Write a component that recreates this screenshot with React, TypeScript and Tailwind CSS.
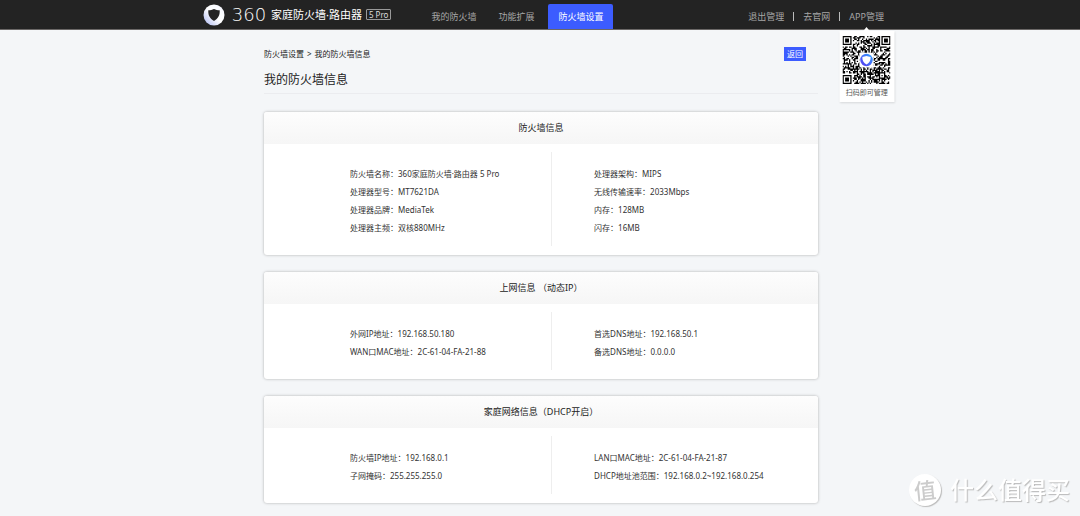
import React from 'react';

type InfoItem = {
  label: string;
  value: string;
};

type InfoCardProps = {
  title: string;
  left: InfoItem[];
  right: InfoItem[];
};

const QR_SIZE = 37;

// Finder squares in three corners, filler modules everywhere else
const isDark = (x: number, y: number) => {
  const corners = [[0, 0], [QR_SIZE - 7, 0], [0, QR_SIZE - 7]];
  for (const [cx, cy] of corners) {
    const dx = Math.abs(x - cx - 3);
    const dy = Math.abs(y - cy - 3);
    const ring = Math.max(dx, dy);
    if (ring <= 4) return ring !== 2 && ring !== 4;
  }
  const ax = Math.max(Math.abs(x - 30), Math.abs(y - 30));
  if (ax <= 2) return ax !== 1;
  let h = Math.imul(x + 11, 374761393) ^ Math.imul(y + 7, 668265263);
  h = Math.imul(h ^ (h >>> 13), 1274126177);
  h = Math.imul(h ^ (h >>> 15), 2246822519);
  return ((h ^ (h >>> 16)) & 255) < 138;
};

const qrPath = () => {
  let d = '';
  for (let y = 0; y < QR_SIZE; y++) {
    for (let x = 0; x < QR_SIZE; x++) {
      if (isDark(x, y)) d += `M${x} ${y}h1v1h-1z`;
    }
  }
  return d;
};

const QrCode = () => (
  <svg viewBox="0 0 37 37" className="size-12" role="img" aria-label="APP二维码">
    <defs>
      <linearGradient id="qr-badge" x1="0" y1="1" x2="1" y2="0">
        <stop offset="0" stopColor="#5a35f0" />
        <stop offset="1" stopColor="#2fa4ff" />
      </linearGradient>
    </defs>
    <path d={qrPath()} fill="#000" />
    <rect x="13" y="13" width="11" height="11" rx="1" fill="#fff" />
    <circle cx="18.5" cy="18.5" r="4.8" fill="url(#qr-badge)" />
    <path d="M18.5 15.400c1 .4 2 .6 3.200.7.1 2.600-.7 4.400-3.200 5.900-2.500-1.500-3.300-3.300-3.200-5.900 1.200-.1 2.200-.3 3.200-.7z" fill="#fff" />
  </svg>
);

const Logo = () => (
  <svg viewBox="0 0 22 22" className="size-[22px]" aria-hidden="true">
    <defs>
      <linearGradient id="logo-ring" x1="0" y1="1" x2="1" y2="0">
        <stop offset="0" stopColor="#a9b4f0" />
        <stop offset="0.5" stopColor="#ffffff" />
        <stop offset="1" stopColor="#f4f6ff" />
      </linearGradient>
    </defs>
    <circle cx="11" cy="11" r="10.5" fill="url(#logo-ring)" />
    <path d="M11 5c1.700.8 3.500 1.200 5.700 1.300.3 4.900-1.500 8.200-5.700 10.700-4.200-2.500-6-5.800-5.700-10.700 2.200-.1 4-.5 5.700-1.300z" fill="#232323" />
  </svg>
);

const InfoList = ({ items }: { items: InfoItem[] }) => (
  <dl className="text-[8px] leading-[18px] text-[#333]">
    {items.map((item) => (
      <div key={item.label} className="flex whitespace-nowrap">
        <dt>{item.label}：</dt>
        <dd>{item.value}</dd>
      </div>
    ))}
  </dl>
);

const InfoCard = ({ title, left, right }: InfoCardProps) => (
  <section className="overflow-hidden rounded-[3px] bg-white shadow-[0_0_3px_rgba(0,0,0,0.3)]">
    <h2 className="bg-linear-to-b from-[#fdfdfd] to-[#f6f6f6] text-center text-[9px] leading-8 text-[#222]">
      {title}
    </h2>
    <div className="flex pt-2 pb-[9px]">
      <div className="w-[52%] border-r border-[#eee] pt-[13px] pb-[9px] pl-[86px]">
        <InfoList items={left} />
      </div>
      <div className="flex-1 pt-[13px] pb-[9px] pl-[42px]">
        <InfoList items={right} />
      </div>
    </div>
  </section>
);

const cards: InfoCardProps[] = [
  {
    title: '防火墙信息',
    left: [
      { label: '防火墙名称', value: '360家庭防火墙·路由器 5 Pro' },
      { label: '处理器型号', value: 'MT7621DA' },
      { label: '处理器品牌', value: 'MediaTek' },
      { label: '处理器主频', value: '双核880MHz' },
    ],
    right: [
      { label: '处理器架构', value: 'MIPS' },
      { label: '无线传输速率', value: '2033Mbps' },
      { label: '内存', value: '128MB' },
      { label: '闪存', value: '16MB' },
    ],
  },
  {
    title: '上网信息 （动态IP）',
    left: [
      { label: '外网IP地址', value: '192.168.50.180' },
      { label: 'WAN口MAC地址', value: '2C-61-04-FA-21-88' },
    ],
    right: [
      { label: '首选DNS地址', value: '192.168.50.1' },
      { label: '备选DNS地址', value: '0.0.0.0' },
    ],
  },
  {
    title: '家庭网络信息（DHCP开启）',
    left: [
      { label: '防火墙IP地址', value: '192.168.0.1' },
      { label: '子网掩码', value: '255.255.255.0' },
    ],
    right: [
      { label: 'LAN口MAC地址', value: '2C-61-04-FA-21-87' },
      { label: 'DHCP地址池范围', value: '192.168.0.2~192.168.0.254' },
    ],
  },
];

const Header = () => (
  <header className="border-b border-[#6b6867] bg-[#232323] text-[9px] text-[#a6a6a6]">
    <div className="mx-auto flex h-[29px] max-w-[690px] items-center pr-px pl-2 whitespace-nowrap">
      <a href="#home" className="flex items-center text-white">
        <Logo />
        <span className="ml-1 w-10 text-center font-['DejaVu_Sans',sans-serif] text-lg leading-5 font-extralight">360</span>
        <span className="ml-[2px] text-[11px] leading-5">家庭防火墙·路由器</span>
        <span className="ml-1 rounded-[1px] border border-[#999] px-[2px] text-[8px] leading-[9px] text-[#ddd]">5 Pro</span>
      </a>

      <nav className="ml-8 flex gap-[14px] self-end leading-[25px]">
        <a href="#firewall" className="pl-2">我的防火墙</a>
        <a href="#extend" className="pl-2">功能扩展</a>
        <a href="#settings" className="rounded-t-[2px] bg-[#3c5cff] px-[10px] text-white">防火墙设置</a>
      </nav>

      <div className="ml-auto flex items-center gap-[9px] pt-1 leading-[25px]">
        <a href="#logout">退出管理</a>
        <span className="h-[9px] w-px bg-[#bbb]" />
        <a href="#site">去官网</a>
        <span className="h-[9px] w-px bg-[#bbb]" />
        <div className="relative">
          <a href="#app">APP管理</a>
          {/* QR popover */}
          <div className="absolute top-[27px] left-1/2 flex w-[55px] -translate-x-1/2 flex-col items-center bg-white pt-[5px] pb-1 shadow-[0_1px_2px_rgba(0,0,0,0.12)]">
            <svg viewBox="0 0 8 5" className="absolute -top-1 h-[5px] w-2" aria-hidden="true">
              <path d="M4 0l4 5H0z" fill="#fff" />
            </svg>
            <QrCode />
            <p className="mt-1 text-[7px] leading-[10px] text-[#555]">扫码即可管理</p>
          </div>
        </div>
      </div>
    </div>
  </header>
);

const Watermark = () => (
  <div className="pointer-events-none fixed right-[10px] bottom-[10px] flex items-center gap-[9px]">
    <span className="flex size-8 items-center justify-center rounded-full bg-white text-[22px] leading-8 font-medium text-[#ccc] shadow-[1px_1px_1px_#bbb]">
      <span className="-rotate-6">值</span>
    </span>
    <span className="text-2xl leading-8 font-medium text-white [text-shadow:1px_1px_1px_#bbb]">什么值得买</span>
  </div>
);

const App = () => {
  return (
    <div className="min-h-screen bg-[#f4f6f8] font-['Noto_Sans','Noto_Sans_CJK_SC',sans-serif]">
      <Header />

      <main className="mx-auto max-w-[556px] pt-[17px] pb-3 pl-[2px]">
        <div className="flex items-center justify-between pr-3">
          <nav className="flex gap-[3px] text-[8px] leading-[14px] text-[#222]">
            <a href="#settings">防火墙设置</a>
            <span>&gt;</span>
            <span>我的防火墙信息</span>
          </nav>
          <button type="button" className="bg-[#3c5cff] px-[3px] text-[8px] leading-[14px] text-white">
            返回
          </button>
        </div>
        <h1 className="mt-[9px] border-b border-[#ebecef] pb-[3px] text-xs leading-5 text-[#222]">
          我的防火墙信息
        </h1>

        <div className="mt-[18px] flex flex-col gap-[17px]">
          {cards.map((card) => (
            <InfoCard key={card.title} {...card} />
          ))}
        </div>
      </main>

      <Watermark />
    </div>
  );
};

export default App;
